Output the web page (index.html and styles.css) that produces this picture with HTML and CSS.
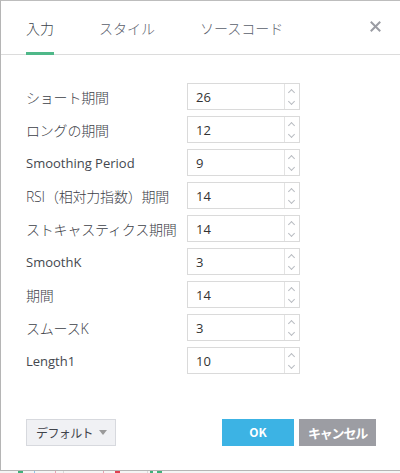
FILE: index.html
```html
<!DOCTYPE html>
<html lang="ja">
<head>
<meta charset="utf-8">
<link rel="stylesheet" href="styles.css">
</head>
<body>
<div class="dialog">
  <div class="header">
    <div class="tabs">
      <div class="tab active">入力</div>
      <div class="tab">スタイル</div>
      <div class="tab">ソースコード</div>
    </div>
    <div class="close">
      <svg width="11" height="11" viewBox="0 0 11 11"><path d="M1.5 1.5 L9.5 9.5 M9.5 1.5 L1.5 9.5" stroke="#9a9ca3" stroke-width="2" stroke-linecap="square"/></svg>
    </div>
  </div>
  <div class="content">
    <div class="row"><div class="label jp">ショート期間</div><div class="input"><span class="val">26</span><span class="spin"><i class="up"></i><i class="down"></i></span></div></div>
    <div class="row"><div class="label jp">ロングの期間</div><div class="input"><span class="val">12</span><span class="spin"><i class="up"></i><i class="down"></i></span></div></div>
    <div class="row"><div class="label">Smoothing Period</div><div class="input"><span class="val">9</span><span class="spin"><i class="up"></i><i class="down"></i></span></div></div>
    <div class="row"><div class="label jp">RSI（相対力指数）期間</div><div class="input"><span class="val">14</span><span class="spin"><i class="up"></i><i class="down"></i></span></div></div>
    <div class="row"><div class="label jp">ストキャスティクス期間</div><div class="input"><span class="val">14</span><span class="spin"><i class="up"></i><i class="down"></i></span></div></div>
    <div class="row"><div class="label">SmoothK</div><div class="input"><span class="val">3</span><span class="spin"><i class="up"></i><i class="down"></i></span></div></div>
    <div class="row"><div class="label jp">期間</div><div class="input"><span class="val">14</span><span class="spin"><i class="up"></i><i class="down"></i></span></div></div>
    <div class="row"><div class="label jp">スムースK</div><div class="input"><span class="val">3</span><span class="spin"><i class="up"></i><i class="down"></i></span></div></div>
    <div class="row"><div class="label">Length1</div><div class="input"><span class="val">10</span><span class="spin"><i class="up"></i><i class="down"></i></span></div></div>
  </div>
  <div class="footer">
    <div class="btn default">デフォルト<span class="caret"></span></div>
    <div class="actions">
      <div class="btn ok">OK</div>
      <div class="btn cancel">キャンセル</div>
    </div>
  </div>
</div>
<div class="chart">
  <span class="bit g" style="left:18px;width:5px"></span>
  <span class="bit b" style="left:34px;width:1px"></span>
  <span class="bit p" style="left:55px;width:1px"></span>
  <span class="bit l" style="left:63px;width:1px"></span>
  <span class="bit p" style="left:103px;width:1px"></span>
  <span class="bit r" style="left:115px;width:5px"></span>
  <span class="bit l" style="left:147px;width:1px"></span>
  <span class="bit g" style="left:150px;width:3px"></span>
  <span class="bit g" style="left:157px;width:5px"></span>
</div>
</body>
</html>
```
FILE: styles.css
```css
html, body {
  margin: 0;
  padding: 0;
  background: #fff;
}
body {
  width: 400px;
  height: 473px;
  overflow: hidden;
  font-family: "Open Sans", "Noto Sans CJK JP", sans-serif;
  color: #3e424a;
}
.dialog {
  box-sizing: border-box;
  height: 471px;
  border-top: 1px solid #bdbdbd;
  border-left: 1px solid #b5b5b5;
  border-bottom: 1px solid #b5b5b5;
  background: #fff;
  display: flex;
  flex-direction: column;
}
.header {
  height: 53px;
  border-bottom: 1px solid #dcdcdc;
  display: flex;
  align-items: stretch;
  justify-content: space-between;
  padding: 0 19px 0 25px;
}
.tabs {
  display: flex;
  gap: 45px;
}
.tab {
  position: relative;
  font-family: "Noto Sans CJK JP", sans-serif;
  font-weight: 300;
  font-size: 14px;
  line-height: 20px;
  padding-top: 17px;
  color: #5a606c;
}
.tab.active {
  color: #3a3f49;
}
.tab.active::after {
  content: "";
  position: absolute;
  left: 0;
  right: 0;
  bottom: -1px;
  height: 3px;
  background: #4fb889;
}
.close {
  padding-top: 14px;
}
.content {
  padding: 28px 0 0 25px;
  display: flex;
  flex-direction: column;
  gap: 6px;
}
.row {
  display: flex;
  align-items: center;
  height: 27px;
}
.label {
  width: 161px;
  font-size: 13px;
  color: #44484f;
  white-space: nowrap;
}
.label.jp {
  font-size: 14px;
  font-weight: 300;
  color: #3c4047;
  letter-spacing: -0.2px;
}
.input {
  box-sizing: border-box;
  width: 113px;
  height: 27px;
  border: 1px solid #dadada;
  display: flex;
}
.val {
  flex: 1;
  padding-left: 8px;
  font-size: 13px;
  line-height: 26px;
  color: #333;
}
.spin {
  width: 14px;
  border-left: 1px solid #e3e3e3;
  display: flex;
  flex-direction: column;
}
.spin i {
  flex: 1;
  position: relative;
}
.spin i::before {
  content: "";
  position: absolute;
  left: 4px;
  width: 4px;
  height: 4px;
  border-left: 1px solid #b9bcc2;
  border-top: 1px solid #b9bcc2;
}
.spin .up::before {
  top: 6px;
  transform: rotate(45deg);
}
.spin .down::before {
  top: 2px;
  transform: rotate(225deg);
}
.footer {
  margin-top: auto;
  padding: 0 24px 24px 25px;
  display: flex;
  justify-content: space-between;
}
.btn {
  box-sizing: border-box;
  height: 27px;
  display: flex;
  align-items: center;
  justify-content: center;
  font-family: "Noto Sans CJK JP", sans-serif;
  font-size: 12px;
}
.default {
  width: 90px;
  background: #f0f1f4;
  border: 1px solid #d7d9de;
  color: #3f434a;
  justify-content: flex-start;
  padding-left: 9px;
  letter-spacing: -0.6px;
}
.caret {
  margin-left: 6px;
  width: 0;
  height: 0;
  border-left: 4px solid transparent;
  border-right: 4px solid transparent;
  border-top: 5px solid #9a9a9a;
}
.actions {
  display: flex;
  gap: 5px;
}
.ok {
  width: 72px;
  background: #3cb3e4;
  color: #fff;
  font-weight: bold;
  font-size: 12px;
  padding-bottom: 2px;
}
.cancel {
  width: 77px;
  background: #9c9da3;
  color: #fff;
  font-weight: bold;
  font-size: 13px;
  letter-spacing: -1.2px;
}
.chart {
  position: relative;
  height: 2px;
  background: #f4f4f4;
}
.bit {
  position: absolute;
  top: 0;
  height: 2px;
}
.bit.g { background: #3fb07a; }
.bit.b { background: #8fc4e8; }
.bit.p { background: #e8a0b0; }
.bit.l { background: #d8d8d8; }
.bit.r { background: #e04050; }
```
